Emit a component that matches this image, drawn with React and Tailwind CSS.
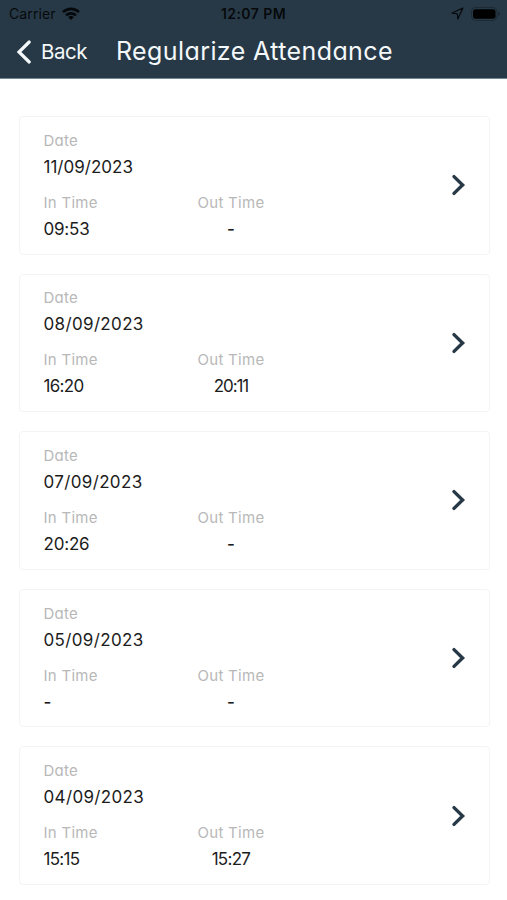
const records = [
  { date: "11/09/2023", inTime: "09:53", outTime: "-" },
  { date: "08/09/2023", inTime: "16:20", outTime: "20:11" },
  { date: "07/09/2023", inTime: "20:26", outTime: "-" },
  { date: "05/09/2023", inTime: "-", outTime: "-" },
  { date: "04/09/2023", inTime: "15:15", outTime: "15:27" },
];

function valueTracking(value) {
  if (value === "-") return "font-medium";
  if (value.includes("/")) return value.startsWith("11") ? "tracking-[0.02px]" : "tracking-[0.35px]";
  if (value.includes("11")) return "tracking-[-1.1px]";
  return value.includes("1") ? "tracking-[-0.7px]" : "tracking-[-0.2px]";
}

function StatusBar() {
  return (
    <div className="grid h-[27px] grid-cols-3 items-center pl-[9px] pr-[7px] text-black/85 [font-feature-settings:normal]">
      <div className="flex items-center gap-[6px]">
        <span className="text-[14px] leading-none tracking-[0.1px]">Carrier</span>
        <svg viewBox="0 0 18 13" className="h-[13px] w-[18px]" fill="none" stroke="currentColor" strokeWidth="2.6">
          <path d="M1 5.1a11.5 11.5 0 0 1 16 0" />
          <path d="M4 8.4a7.2 7.2 0 0 1 10 0" />
          <path d="M9 12.9 6.2 10.2a4 4 0 0 1 5.6 0Z" fill="currentColor" stroke="none" />
        </svg>
      </div>
      <span className="-ml-[2px] pt-px text-center text-[14px] font-semibold leading-none tracking-[0.45px]">
        12:07 PM
      </span>
      <div className="flex items-center justify-end gap-[7px]">
        <svg viewBox="0 0 12 12" className="size-[13px]" fill="none" stroke="currentColor" strokeWidth="1.1" strokeLinejoin="round">
          <path d="M11 1 1 5.6l4.8.6.5 4.8Z" />
        </svg>
        <svg viewBox="0 0 29 14" className="h-[14px] w-[29px]">
          <rect x="0.5" y="0.5" width="25.5" height="13" rx="4" fill="none" stroke="currentColor" strokeOpacity="0.3" />
          <rect x="2" y="2.2" width="22.5" height="9.6" rx="2.5" fill="#000" />
          <path d="M27.2 4.8v4.4a2.3 2.3 0 0 0 0-4.4Z" fill="currentColor" fillOpacity="0.4" />
        </svg>
      </div>
    </div>
  );
}

function Header() {
  return (
    <header className="h-[79px] border-b border-[#6f8796] bg-[#273946]">
      <StatusBar />
      <div className="flex h-[50px] items-center pl-[16px] text-[#f4f8fb]">
        <button type="button" className="flex items-center">
          <svg viewBox="0 0 15 24" className="h-[24px] w-[15px]" fill="none" stroke="currentColor" strokeWidth="3.2" strokeLinecap="round">
            <path d="M13.2 2 3 12l10.2 10" />
          </svg>
          <span className="ml-[10px] w-[75px] text-left text-[20.5px] leading-none tracking-[-0.5px] [font-feature-settings:normal]">
            Back
          </span>
        </button>
        <h1 className="whitespace-nowrap pb-[2px] text-[25px] leading-none tracking-[0.4px]">Regularize Attendance</h1>
      </div>
    </header>
  );
}

function Field({ label, value, center }) {
  return (
    <div className={center ? "text-center" : ""}>
      <p className="text-[15px] leading-[20px] tracking-[0.28px] text-[#b8b8b8]">{label}</p>
      <p className={`mt-[4px] text-[17px] leading-[24px] text-[#1c1c1c] ${valueTracking(value)}`}>{value}</p>
    </div>
  );
}

function AttendanceCard({ date, inTime, outTime }) {
  return (
    <li className="flex h-[138.6px] items-center justify-between rounded-[4px] border border-[#f4f4f4] pl-[24px] pr-[23.5px]">
      <div className="flex flex-col gap-[14px] pt-px">
        <Field label="Date" value={date} />
        <div className="flex">
          <div className="w-[154px]">
            <Field label="In Time" value={inTime} />
          </div>
          <Field label="Out Time" value={outTime} center />
        </div>
      </div>
      <svg viewBox="0 0 15 22" className="h-[22px] w-[15px]" fill="none" stroke="#273946" strokeWidth="3.4" strokeLinecap="round">
        <path d="M3 2.6 11.6 11 3 19.4" />
      </svg>
    </li>
  );
}

export default function App() {
  return (
    <div className="h-[900px] overflow-hidden bg-white font-['Inter',sans-serif] [font-feature-settings:'cv11']">
      <Header />
      <ul className="flex flex-col gap-[19px] pl-[18.5px] pr-[17px] pt-[37px]">
        {records.map((record) => (
          <AttendanceCard key={record.date} {...record} />
        ))}
      </ul>
    </div>
  );
}
